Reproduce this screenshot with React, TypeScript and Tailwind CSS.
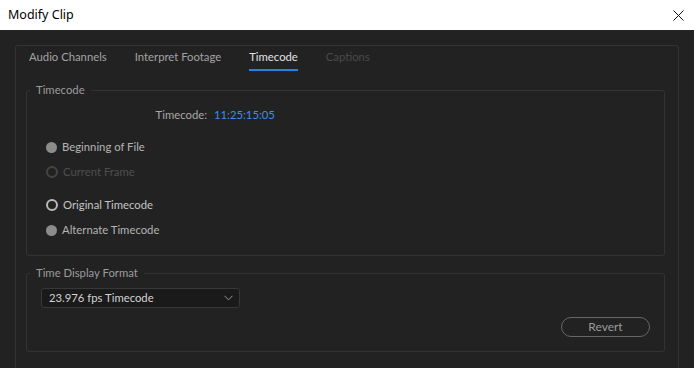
import React from "react";

const font = { fontFamily: "Lato, 'Noto Sans', sans-serif" };

const Radio = ({
  label,
  kind,
}: {
  label: string;
  kind: "filled" | "ring" | "disabled";
}) => {
  return (
    <div className="flex items-center h-[18px] gap-[5px]">
      {kind === "filled" && (
        <span className="w-[11px] h-[11px] rounded-full bg-[#8c8c8c]" />
      )}
      {kind === "ring" && (
        <span className="w-[12px] h-[12px] rounded-full border-2 border-[#b8b8b8]" />
      )}
      {kind === "disabled" && (
        <span className="w-[12px] h-[12px] rounded-full border-2 border-[#444]" />
      )}
      <span
        className={
          kind === "disabled"
            ? "text-[#4f4f4f]"
            : kind === "ring"
            ? "text-[#c4c4c4]"
            : "text-[#b4b4b4]"
        }
      >
        {label}
      </span>
    </div>
  );
};

const Group = ({
  title,
  className,
  children,
}: {
  title: string;
  className?: string;
  children: React.ReactNode;
}) => (
  <div
    className={`relative border border-[#333] rounded-[3px] ${className ?? ""}`}
  >
    <span className="absolute -top-[9px] left-[3px] px-[6px] bg-[#222] text-[#9c9c9c] leading-[16px]">
      {title}
    </span>
    {children}
  </div>
);

export default function App() {
  return (
    <div
      className="w-[694px] h-[368px] overflow-hidden flex flex-col text-[11.3px]"
      style={font}
    >
      <div className="h-[30px] bg-white flex items-center justify-between pl-[8px] pr-[10px] shrink-0">
        <span className="text-[12.5px] text-black" style={{ fontFamily: "'Noto Sans', sans-serif" }}>
          Modify Clip
        </span>
        <svg width="11" height="11" viewBox="0 0 11 11">
          <path d="M0.5 0.5 L10.5 10.5 M10.5 0.5 L0.5 10.5" stroke="#111" strokeWidth="1" />
        </svg>
      </div>
      <div className="flex-1 bg-[#222] pt-[15px] pl-[15px] pr-[15px]">
        <div className="h-full border border-b-0 border-[#333] rounded-t-[3px] pl-[10px] pr-[13px]">
          <div className="flex items-end h-[25px] pl-[3px] gap-[28px]">
            <span className="text-[#a2a2a2] pb-[5px]">Audio Channels</span>
            <span className="text-[#a2a2a2] pb-[5px]">Interpret Footage</span>
            <span className="text-[#e2e2e2] pb-[3px] border-b-2 border-[#2d7fe0]">
              Timecode
            </span>
            <span className="text-[#4a4a4a] pb-[5px]">Captions</span>
          </div>
          <Group title="Timecode" className="mt-[19px] h-[166px]">
            <div className="flex items-center pt-[15px] h-[33px]">
              <span className="w-[180px] text-right text-[#a8a8a8]">Timecode:</span>
              <span className="ml-[7px] text-[#3a8ff0]">11:25:15:05</span>
            </div>
            <div className="flex flex-col pl-[19px] mt-[14px] gap-[7px]">
              <Radio label="Beginning of File" kind="filled" />
              <Radio label="Current Frame" kind="disabled" />
            </div>
            <div className="flex flex-col pl-[19px] mt-[15px] gap-[7px]">
              <Radio label="Original Timecode" kind="ring" />
              <Radio label="Alternate Timecode" kind="filled" />
            </div>
          </Group>
          <Group title="Time Display Format" className="mt-[17px] h-[79px] px-[14px] pt-[14px]">
            <div className="w-[199px] h-[20px] bg-[#1a1a1a] border border-[#383838] rounded-[3px] flex items-center justify-between pl-[7px] pr-[6px]">
              <span className="text-[#d2d2d2]">23.976 fps Timecode</span>
              <svg width="9" height="6" viewBox="0 0 9 6">
                <path d="M0.5 0.8 L4.5 4.8 L8.5 0.8" fill="none" stroke="#9a9a9a" strokeWidth="1" />
              </svg>
            </div>
            <div className="flex justify-end mt-[9px]">
              <button className="w-[89px] h-[20px] rounded-full border border-[#666] text-[#9a9a9a] text-[12px] leading-none">
                Revert
              </button>
            </div>
          </Group>
        </div>
      </div>
    </div>
  );
}
